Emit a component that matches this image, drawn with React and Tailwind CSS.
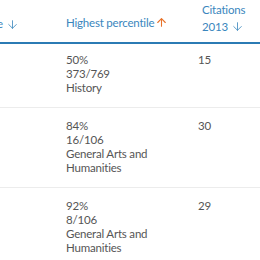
import { ArrowDown, ArrowUp } from "lucide-react";

const rows = [
  { pct: "50%", rank: "373/769", area: ["History"], cites: "15" },
  { pct: "84%", rank: "16/106", area: ["General Arts and", "Humanities"], cites: "30" },
  { pct: "92%", rank: "8/106", area: ["General Arts and", "Humanities"], cites: "29" },
];

export default function App() {
  return (
    <div className="w-[260px] h-[260px] overflow-hidden bg-white font-['Lato',sans-serif] text-[11.5px] leading-[14px] tracking-[-0.2px]">
      {/* header */}
      <div className="grid grid-cols-[66px_136px_1fr] h-[44px] border-b-2 border-[#2b7bb4] text-[#3a86bd]">
        <div className="relative">
          <span className="absolute right-[47px] top-[17px] flex items-center whitespace-nowrap">
            CiteScore
            <ArrowDown className="ml-[3px] w-[13px] h-[13px]" strokeWidth={1.5} />
          </span>
        </div>
        <div className="flex items-center pt-[3px]">
          Highest percentile
          <ArrowUp className="ml-[1px] w-[13px] h-[13px] text-[#e8722a]" strokeWidth={2} />
        </div>
        <div className="pt-[1px] leading-[17px]">
          <div>Citations</div>
          <div className="flex items-center">
            2013
            <ArrowDown className="ml-[3px] w-[13px] h-[13px]" strokeWidth={1.5} />
          </div>
        </div>
      </div>

      {/* rows */}
      {rows.map((r, i) => (
        <div
          key={i}
          className={`grid grid-cols-[66px_132px_1fr] pb-[12px] border-b border-[#ececec] text-[#555555] ${i === 0 ? "pt-[9px]" : "pt-[11px]"}`}
        >
          <div />
          <div>
            <div>{r.pct}</div>
            <div>{r.rank}</div>
            {r.area.map((a) => (
              <div key={a}>{a}</div>
            ))}
          </div>
          <div>{r.cites}</div>
        </div>
      ))}
    </div>
  );
}
